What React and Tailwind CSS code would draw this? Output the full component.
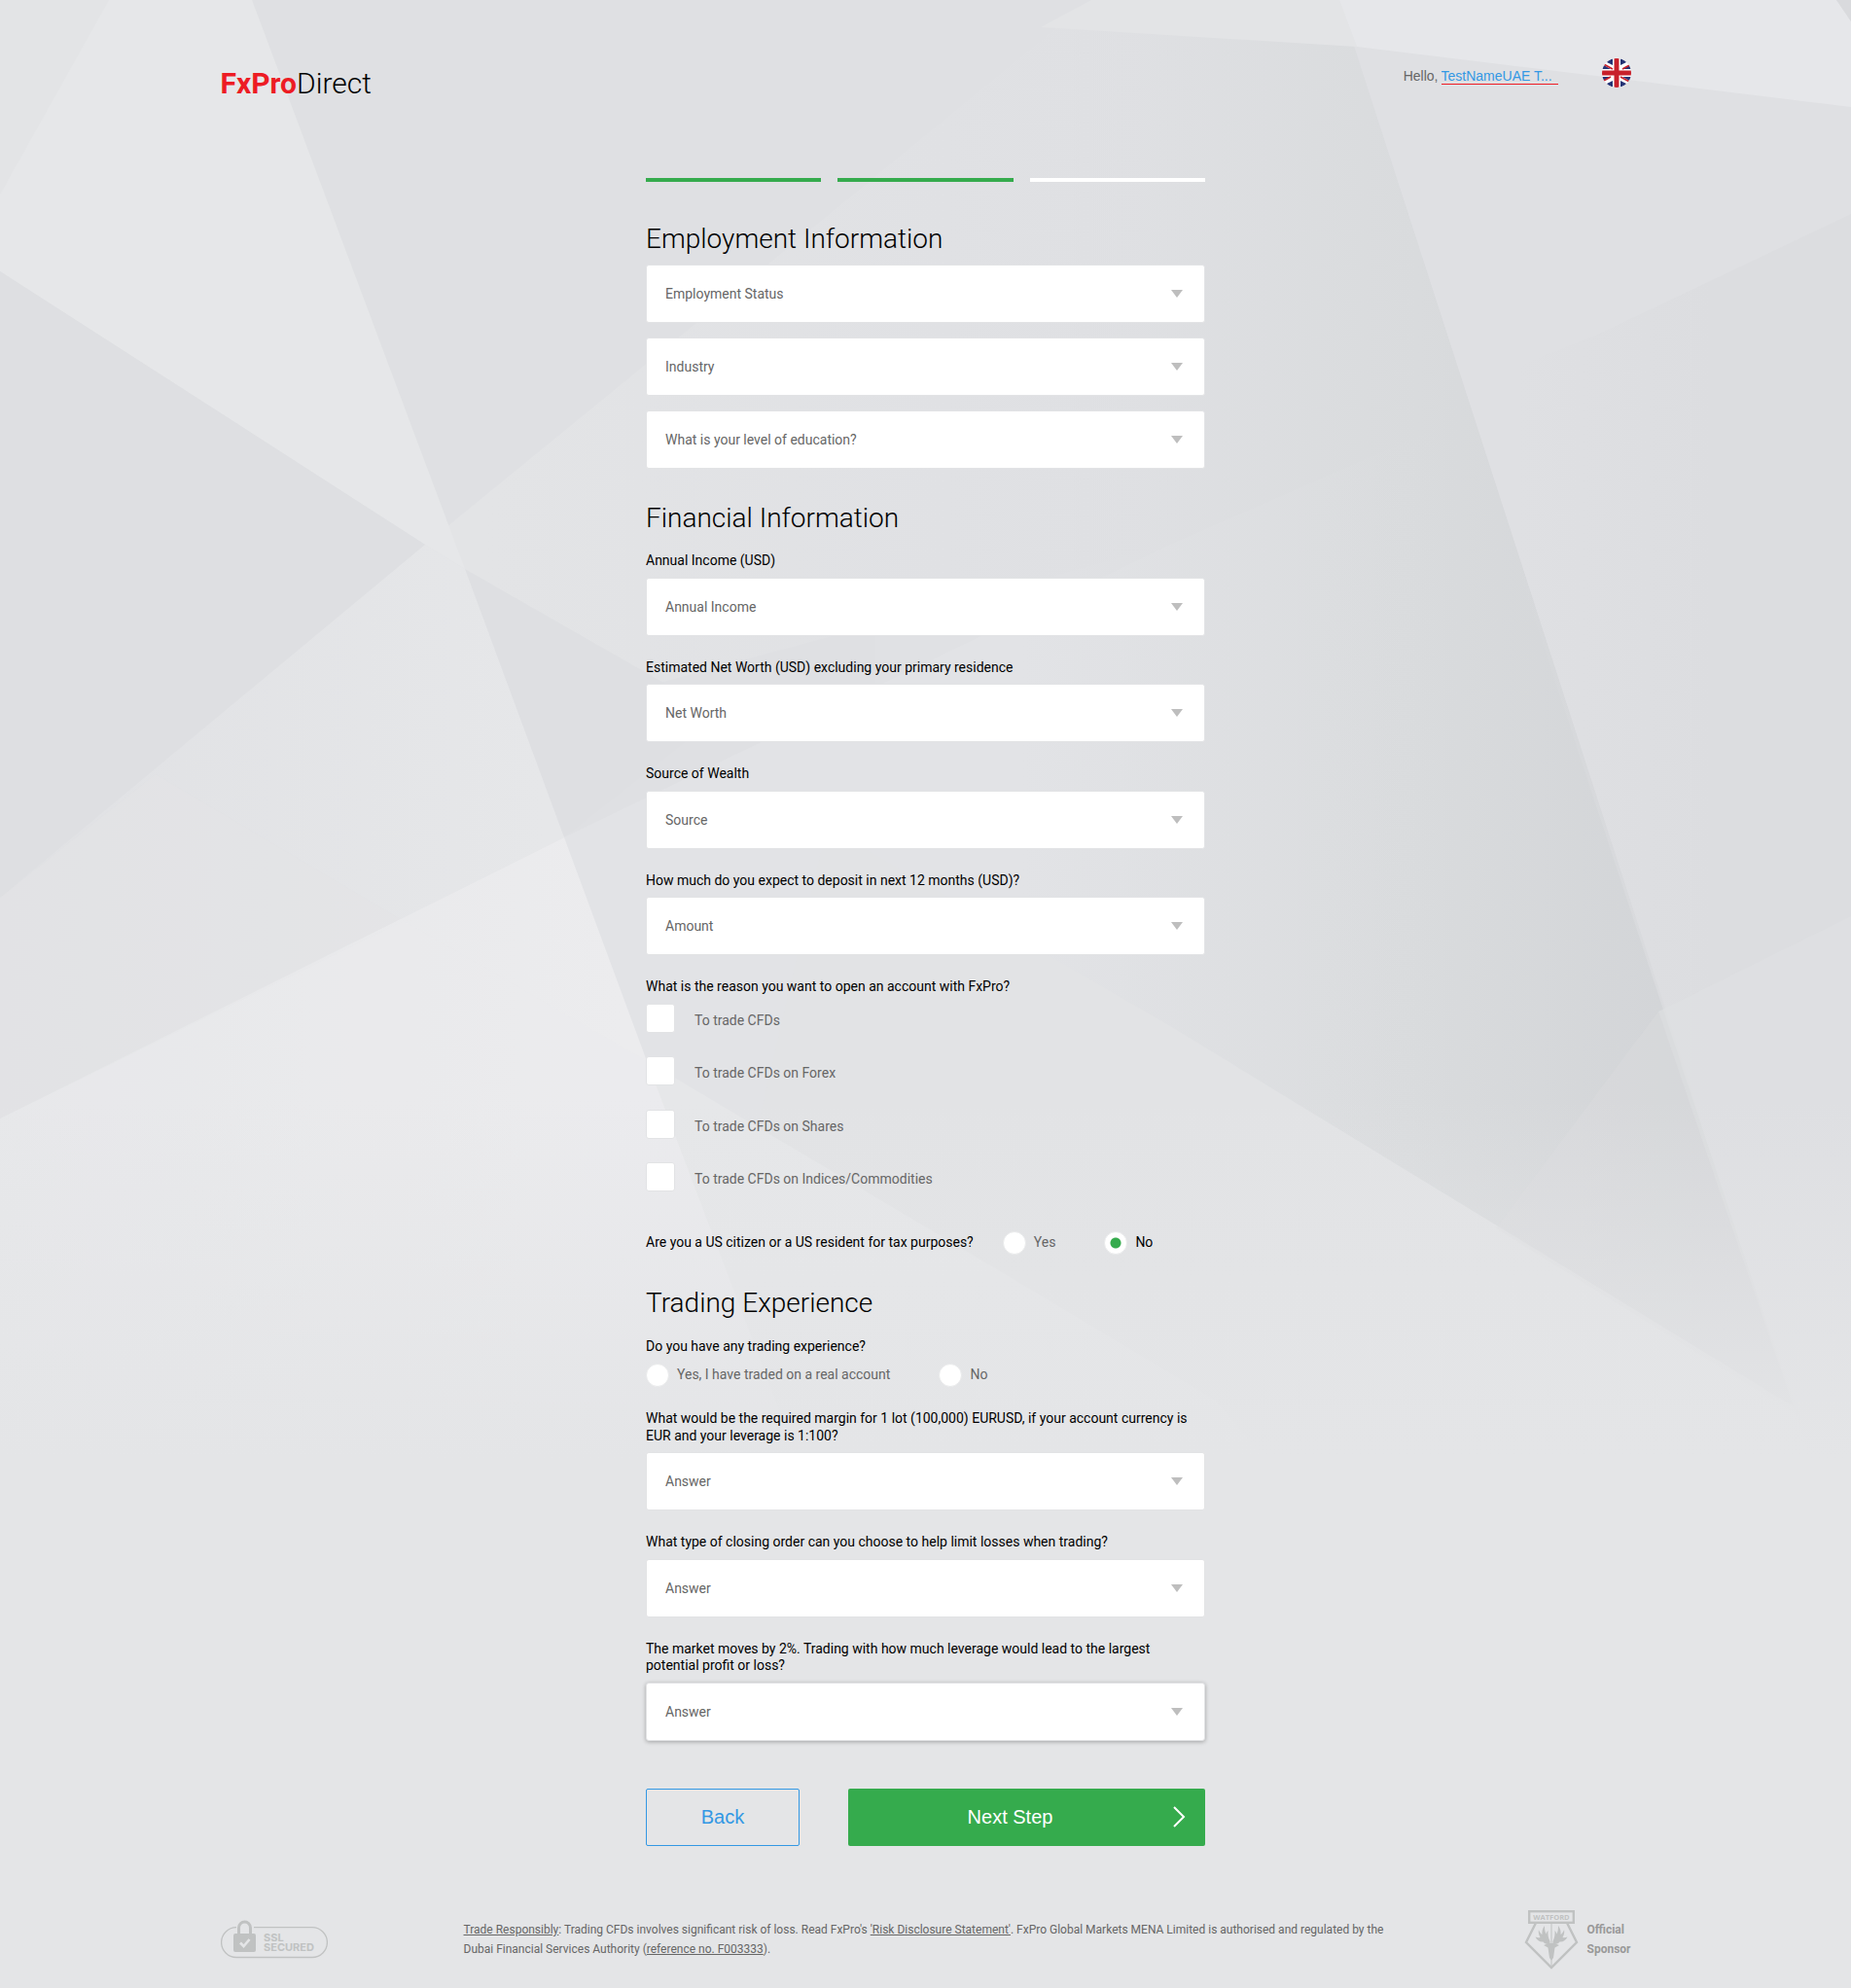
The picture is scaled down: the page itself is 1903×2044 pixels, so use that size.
import React from "react";

const ROBOTO = "font-['Roboto',sans-serif]";
const ARIAL = "font-['Liberation_Sans',Arial,sans-serif]";

function Backdrop() {
  return (
    <svg
      className="pointer-events-none absolute inset-x-0 top-0 h-[1500px] w-full"
      viewBox="0 0 1903 1500"
      preserveAspectRatio="xMidYMin slice"
      aria-hidden="true"
    >
      <defs>
        <linearGradient id="shade" gradientUnits="userSpaceOnUse" x1="1100" y1="0" x2="1750" y2="0">
          <stop offset="0" stopColor="#e0e1e4" />
          <stop offset="0.55" stopColor="#d9dbdd" />
          <stop offset="1" stopColor="#d2d4d7" />
        </linearGradient>
        <linearGradient id="lower" gradientUnits="userSpaceOnUse" x1="1050" y1="0" x2="1480" y2="0">
          <stop offset="0" stopColor="#e2e3e6" />
          <stop offset="1" stopColor="#dcdee0" stopOpacity="0" />
        </linearGradient>
        <linearGradient id="glow" gradientUnits="userSpaceOnUse" x1="0" y1="0" x2="640" y2="0">
          <stop offset="0" stopColor="#e5e6e8" />
          <stop offset="1" stopColor="#ececee" />
        </linearGradient>
        <linearGradient id="midBand" gradientUnits="userSpaceOnUse" x1="0" y1="0" x2="560" y2="0">
          <stop offset="0" stopColor="#e0e1e4" />
          <stop offset="1" stopColor="#e6e7e9" />
        </linearGradient>
        <linearGradient id="side" gradientUnits="userSpaceOnUse" x1="1560" y1="0" x2="1760" y2="0">
          <stop offset="0" stopColor="#dcdde0" stopOpacity="0" />
          <stop offset="1" stopColor="#dcdde0" />
        </linearGradient>
        <linearGradient id="fan" gradientUnits="userSpaceOnUse" x1="500" y1="0" x2="1290" y2="0">
          <stop offset="0" stopColor="#e3e4e6" />
          <stop offset="0.6" stopColor="#e0e1e4" />
          <stop offset="1" stopColor="#dddee1" stopOpacity="0" />
        </linearGradient>
        <linearGradient id="fade" x1="0" y1="0" x2="0" y2="1">
          <stop offset="0" stopColor="#e4e5e7" stopOpacity="0" />
          <stop offset="1" stopColor="#e4e5e7" />
        </linearGradient>
      </defs>
      <rect width="1903" height="1500" fill="#dfe0e3" />
      <polygon points="1122,0 1377,0 1841,1435 1862,1500 900,1500 900,181" fill="url(#shade)" />
      <polygon points="1122,0 437,560 656,708 1203,560 1400,460 1300,0" fill="url(#fan)" />
      <polygon points="437,560 478,585 740,735 580,861" fill="#dedfe2" />
      <polygon points="580,861 1203,560 1500,430 1640,820 1841,1435 1903,1500 700,1500" fill="url(#lower)" />
      <polygon points="1203,1055 850,850 700,1500 1903,1500 1873,1464" fill="#e2e3e5" />
      <polygon points="665,1091 1050,1320 1250,1440 1300,1500 800,1500" fill="#e6e7e9" />
      <polygon points="259,0 478,585 437,560 0,279 0,0" fill="#e6e7e9" />
      <polygon points="112,0 0,200 0,0" fill="#e3e4e6" />
      <polygon points="0,279 437,560 0,923" fill="#dedfe2" />
      <polygon points="0,923 437,560 478,585 580,861 0,1150" fill="url(#midBand)" />
      <polygon points="160,796 415,947 0,1150 0,923" fill="#e3e4e6" opacity="0.5" />
      <polygon points="0,1150 580,861 665,1091 820,1500 0,1500" fill="url(#glow)" />
      <polygon points="415,947 0,1150 0,1500 820,1500 665,1091" fill="#ececed" opacity="0.4" />
      <polygon points="1377,0 1903,0 1903,1500 1862,1500" fill="#dfe0e3" />
      <polygon points="1903,220 1640,345 1500,400 1862,1500 1903,1500" fill="url(#side)" />
      <polygon points="1903,942 1705,1040 1862,1500 1903,1500" fill="#e0e1e3" opacity="0.6" />
      <polygon points="1705,1040 1538,1263 1850,1456" fill="#dbdcdf" opacity="0.4" />
      <polygon points="1122,0 1377,0 1395,48 1070,28" fill="#e3e4e6" />
      <polygon points="1377,0 1888,0 1903,22 1903,110 1395,48" fill="#e6e7ea" />
      <polygon points="1888,0 1903,0 1903,22" fill="#d9dadd" />
      <rect y="1130" width="1903" height="370" fill="url(#fade)" />
    </svg>
  );
}

function Flag() {
  return (
    <svg className="block size-[30px]" viewBox="0 0 30 30" aria-hidden="true">
      <clipPath id="disc">
        <circle cx="15" cy="15" r="15" />
      </clipPath>
      <g clipPath="url(#disc)">
        <rect width="30" height="30" fill="#fff" />
        <g fill="#243274">
          <path d="M11 0v7L4 3.500z" />
          <path d="M19 0v7l7-3.500z" />
          <path d="M0 6l9 5H0z" />
          <path d="M30 6l-9 5h9z" />
          <path d="M0 24l9-5H0z" />
          <path d="M30 24l-9-5h9z" />
          <path d="M11 30v-7l-7 3.500z" />
          <path d="M19 30v-7l7 3.500z" />
        </g>
        <g stroke="#c8202b" strokeWidth="1.600">
          <path d="M0 5l11 6M30 6l-9 5M0 24l9-5M30 25l-11-6" />
        </g>
        <path d="M12.500 0h5v12.500H30v5H17.500V30h-5V17.500H0v-5h12.500z" fill="#c8202b" />
      </g>
    </svg>
  );
}

function Select({ id, placeholder, label, raised }) {
  return (
    <div className="relative">
      <select
        id={id}
        aria-label={label}
        defaultValue=""
        className={
          "block h-[60px] w-full appearance-none rounded-[3px] border border-[#e2e3e5] bg-white pr-12 pl-[19px] text-sm text-[#666] outline-none " +
          (raised ? "shadow-[0_1px_4px_rgba(0,0,0,0.3)]" : "")
        }
      >
        <option value="">{placeholder}</option>
      </select>
      <svg
        className="pointer-events-none absolute top-[26px] right-[23px] h-2 w-3"
        viewBox="0 0 12 8"
        aria-hidden="true"
      >
        <path d="M0 0h12L6 8z" fill="#bebebe" />
      </svg>
    </div>
  );
}

function Field({ id, label, placeholder, raised }) {
  return (
    <div>
      <label htmlFor={id} className="mb-2 block text-sm leading-tight text-black">
        {label}
      </label>
      <Select id={id} placeholder={placeholder} raised={raised} />
    </div>
  );
}

function Check({ id, label }) {
  return (
    <div className="flex items-start gap-5">
      <input
        id={id}
        type="checkbox"
        className="size-[30px] shrink-0 appearance-none rounded-[3px] border border-[#e2e3e5] bg-white checked:bg-[#35ab4d]"
      />
      <label htmlFor={id} className="pt-[9px] pb-7 text-sm leading-tight text-[#666]">
        {label}
      </label>
    </div>
  );
}

function Radio({ name, label, checked }) {
  return (
    <label className="flex items-center gap-2 text-sm leading-tight text-[#666] has-checked:text-black">
      <input
        type="radio"
        name={name}
        defaultChecked={checked}
        className="size-6 shrink-0 appearance-none rounded-full border border-[#e9eaeb] bg-white checked:bg-[radial-gradient(circle,#35ab4d_5px,#fff_6px)]"
      />
      {label}
    </label>
  );
}

function Heading({ children }) {
  return <h2 className="text-[28px] leading-9 font-light text-black">{children}</h2>;
}

function SslBadge() {
  return (
    <svg className="h-10 w-[110px] shrink-0" viewBox="0 0 110 40" role="img" aria-label="SSL Secured">
      <path
        d="M16 7.700A15.400 15.400 0 0 0 16 38.500H94A15.400 15.400 0 0 0 94 7.700H34"
        fill="none"
        stroke="#c0c2c2"
        strokeWidth="1.300"
      />
      <path d="M18.500 16V8a6 6 0 0 1 12 0v8" fill="none" stroke="#c0c2c2" strokeWidth="3" />
      <rect x="13" y="14" width="23" height="19" rx="2" fill="#c0c2c2" />
      <path d="M20 23.500l3.500 3.500 6-7" fill="none" stroke="#e4e5e7" strokeWidth="2.600" />
      <g fill="#c0c2c2" fontFamily="Inter, sans-serif" fontWeight="700" fontSize="11">
        <text x="44" y="22">SSL</text>
        <text x="44" y="32">SECURED</text>
      </g>
    </svg>
  );
}

function WatfordCrest() {
  return (
    <svg className="h-[61px] w-[56px] shrink-0" viewBox="0 0 56 61" role="img" aria-label="Watford">
      <path d="M12 13L2 33l26 26 26-26-10-20" fill="none" stroke="#c0c2c2" strokeWidth="2.400" />
      <rect x="5.200" y="1.200" width="45.600" height="11.600" fill="#e4e5e7" stroke="#c0c2c2" strokeWidth="2.400" />
      <text
        x="28"
        y="10"
        textAnchor="middle"
        fill="#c0c2c2"
        fontFamily="Open Sans, sans-serif"
        fontWeight="700"
        fontSize="7.500"
      >
        WATFORD
      </text>
      <path d="M28 13v46" stroke="#c0c2c2" strokeWidth="1" />
      <g fill="#c0c2c2">
        <path d="M26.500 35c-4 .5-6-1-7-2.500-3 .5-6-1-8-5 2 .8 3.500 1 5 .6-1.500-2.500-2-5-1.600-8 1 2.500 2 4 3.600 5-.4-3 .2-6 2.500-9 0 3.500.3 6 1.500 8.500.5-1.500 1-2.500 2-3.500-.3 4 .2 7.500 2 11z" />
        <path d="M29.500 35c4 .5 6-1 7-2.500 3 .5 6-1 8-5-2 .8-3.500 1-5 .6 1.500-2.500 2-5 1.600-8-1 2.500-2 4-3.600 5 .4-3-.2-6-2.500-9 0 3.500-.3 6-1.500 8.500-.5-1.500-1-2.500-2-3.500.3 4-.2 7.500-2 11z" />
        <path d="M20 36l5-2h6l5 2-4.500 2.500L30 49l-2 2.500-2-2.500-1.500-10.500z" />
      </g>
    </svg>
  );
}

export default function App() {
  return (
    <div className={"relative min-h-screen bg-[#e4e5e7] px-4 " + ROBOTO}>
      <Backdrop />
      <div className="relative mx-auto max-w-[1450px]">
        <header className="flex items-start justify-between pt-[60px]">
          <a href="#home" className="mt-2 text-3xl leading-9 font-light text-black">
            <span className="font-bold text-[#ed1c24]">FxPro</span>Direct
          </a>
          <div className="flex items-start gap-[45px]">
            <div className={"mt-[10px] flex items-start gap-[3px] text-sm leading-4 text-[#666] " + ARIAL}>
              <span>Hello,</span>
              <a href="#profile" className="w-[120px] truncate border-b border-[#ed1c24] leading-4 text-[#3398e4]">
                TestNameUAE T...
              </a>
            </div>
            <button type="button" aria-label="Language: English">
              <Flag />
            </button>
          </div>
        </header>

        <main className="mx-auto w-full max-w-[575px] pt-[79px]">
          <div className="grid grid-cols-3 gap-[17px]">
            <span className="h-1 bg-[#35ab4d]" />
            <span className="h-1 bg-[#35ab4d]" />
            <span className="h-1 bg-white" />
          </div>

          <form onSubmit={(e) => e.preventDefault()}>
            <section className="mt-[41px]">
              <Heading>Employment Information</Heading>
              <div className="mt-2 flex flex-col gap-[15px]">
                <Select id="status" label="Employment Status" placeholder="Employment Status" />
                <Select id="industry" label="Industry" placeholder="Industry" />
                <Select id="education" label="Level of education" placeholder="What is your level of education?" />
              </div>
            </section>

            <section className="mt-[33px]">
              <Heading>Financial Information</Heading>
              <div className="mt-[17px] flex flex-col gap-6">
                <Field id="income" label="Annual Income (USD)" placeholder="Annual Income" />
                <Field
                  id="worth"
                  label="Estimated Net Worth (USD) excluding your primary residence"
                  placeholder="Net Worth"
                />
                <Field id="source" label="Source of Wealth" placeholder="Source" />
                <Field
                  id="deposit"
                  label="How much do you expect to deposit in next 12 months (USD)?"
                  placeholder="Amount"
                />
                <fieldset>
                  <legend className="mb-2 text-sm leading-tight text-black">
                    What is the reason you want to open an account with FxPro?
                  </legend>
                  <Check id="cfds" label="To trade CFDs" />
                  <Check id="forex" label="To trade CFDs on Forex" />
                  <Check id="shares" label="To trade CFDs on Shares" />
                  <Check id="indices" label="To trade CFDs on Indices/Commodities" />
                </fieldset>
              </div>
              <div role="radiogroup" aria-labelledby="us-label" className="mt-4 flex flex-wrap items-center">
                <span id="us-label" className="mr-[30px] text-sm leading-tight text-black">
                  Are you a US citizen or a US resident for tax purposes?
                </span>
                <div className="flex gap-[50px]">
                  <Radio name="us" label="Yes" />
                  <Radio name="us" label="No" checked />
                </div>
              </div>
            </section>

            <section className="mt-8">
              <Heading>Trading Experience</Heading>
              <div className="mt-[18px] flex flex-col gap-6">
                <div role="radiogroup" aria-labelledby="exp-label">
                  <p id="exp-label" className="mb-[9px] text-sm leading-tight text-black">
                    Do you have any trading experience?
                  </p>
                  <div className="flex gap-[50px]">
                    <Radio name="experience" label="Yes, I have traded on a real account" />
                    <Radio name="experience" label="No" />
                  </div>
                </div>
                <Field
                  id="margin"
                  label="What would be the required margin for 1 lot (100,000) EURUSD, if your account currency is EUR and your leverage is 1:100?"
                  placeholder="Answer"
                />
                <Field
                  id="closing"
                  label="What type of closing order can you choose to help limit losses when trading?"
                  placeholder="Answer"
                />
                <Field
                  id="leverage"
                  label="The market moves by 2%. Trading with how much leverage would lead to the largest potential profit or loss?"
                  placeholder="Answer"
                  raised
                />
              </div>
            </section>

            <div className={"mt-[49px] flex gap-[50px] text-xl leading-6 " + ARIAL}>
              <button
                type="button"
                className="h-[59px] w-[158px] rounded-[2px] border border-[#3398e4] text-[#3398e4]"
              >
                Back
              </button>
              <button
                type="submit"
                className="flex h-[59px] flex-1 items-center rounded-[2px] bg-[#35ab4d] pr-5 text-white"
              >
                <span className="flex-1 text-center">Next Step</span>
                <svg className="h-[22px] w-[14px]" viewBox="0 0 14 22" fill="none" aria-hidden="true">
                  <path d="M2 1l10 10L2 21" stroke="#fff" strokeWidth="2" />
                </svg>
              </button>
            </div>
          </form>
        </main>

        <footer className="mt-[66px] flex items-center pb-4 text-xs leading-5">
          <SslBadge />
          <p className="ml-[140px] max-w-[960px] text-[#666]">
            <a href="#trade-responsibly" className="underline">Trade Responsibly</a>: Trading CFDs involves significant
            risk of loss. Read FxPro's <a href="#risk" className="underline">'Risk Disclosure Statement'</a>. FxPro
            Global Markets MENA Limited is authorised and regulated by the Dubai Financial Services Authority (
            <a href="#reference" className="underline">reference no. F003333</a>).
          </p>
          <div className="ml-auto flex items-center gap-[9px] font-bold text-[#999]">
            <WatfordCrest />
            <p>
              Official
              <br />
              Sponsor
            </p>
          </div>
        </footer>
      </div>
    </div>
  );
}
